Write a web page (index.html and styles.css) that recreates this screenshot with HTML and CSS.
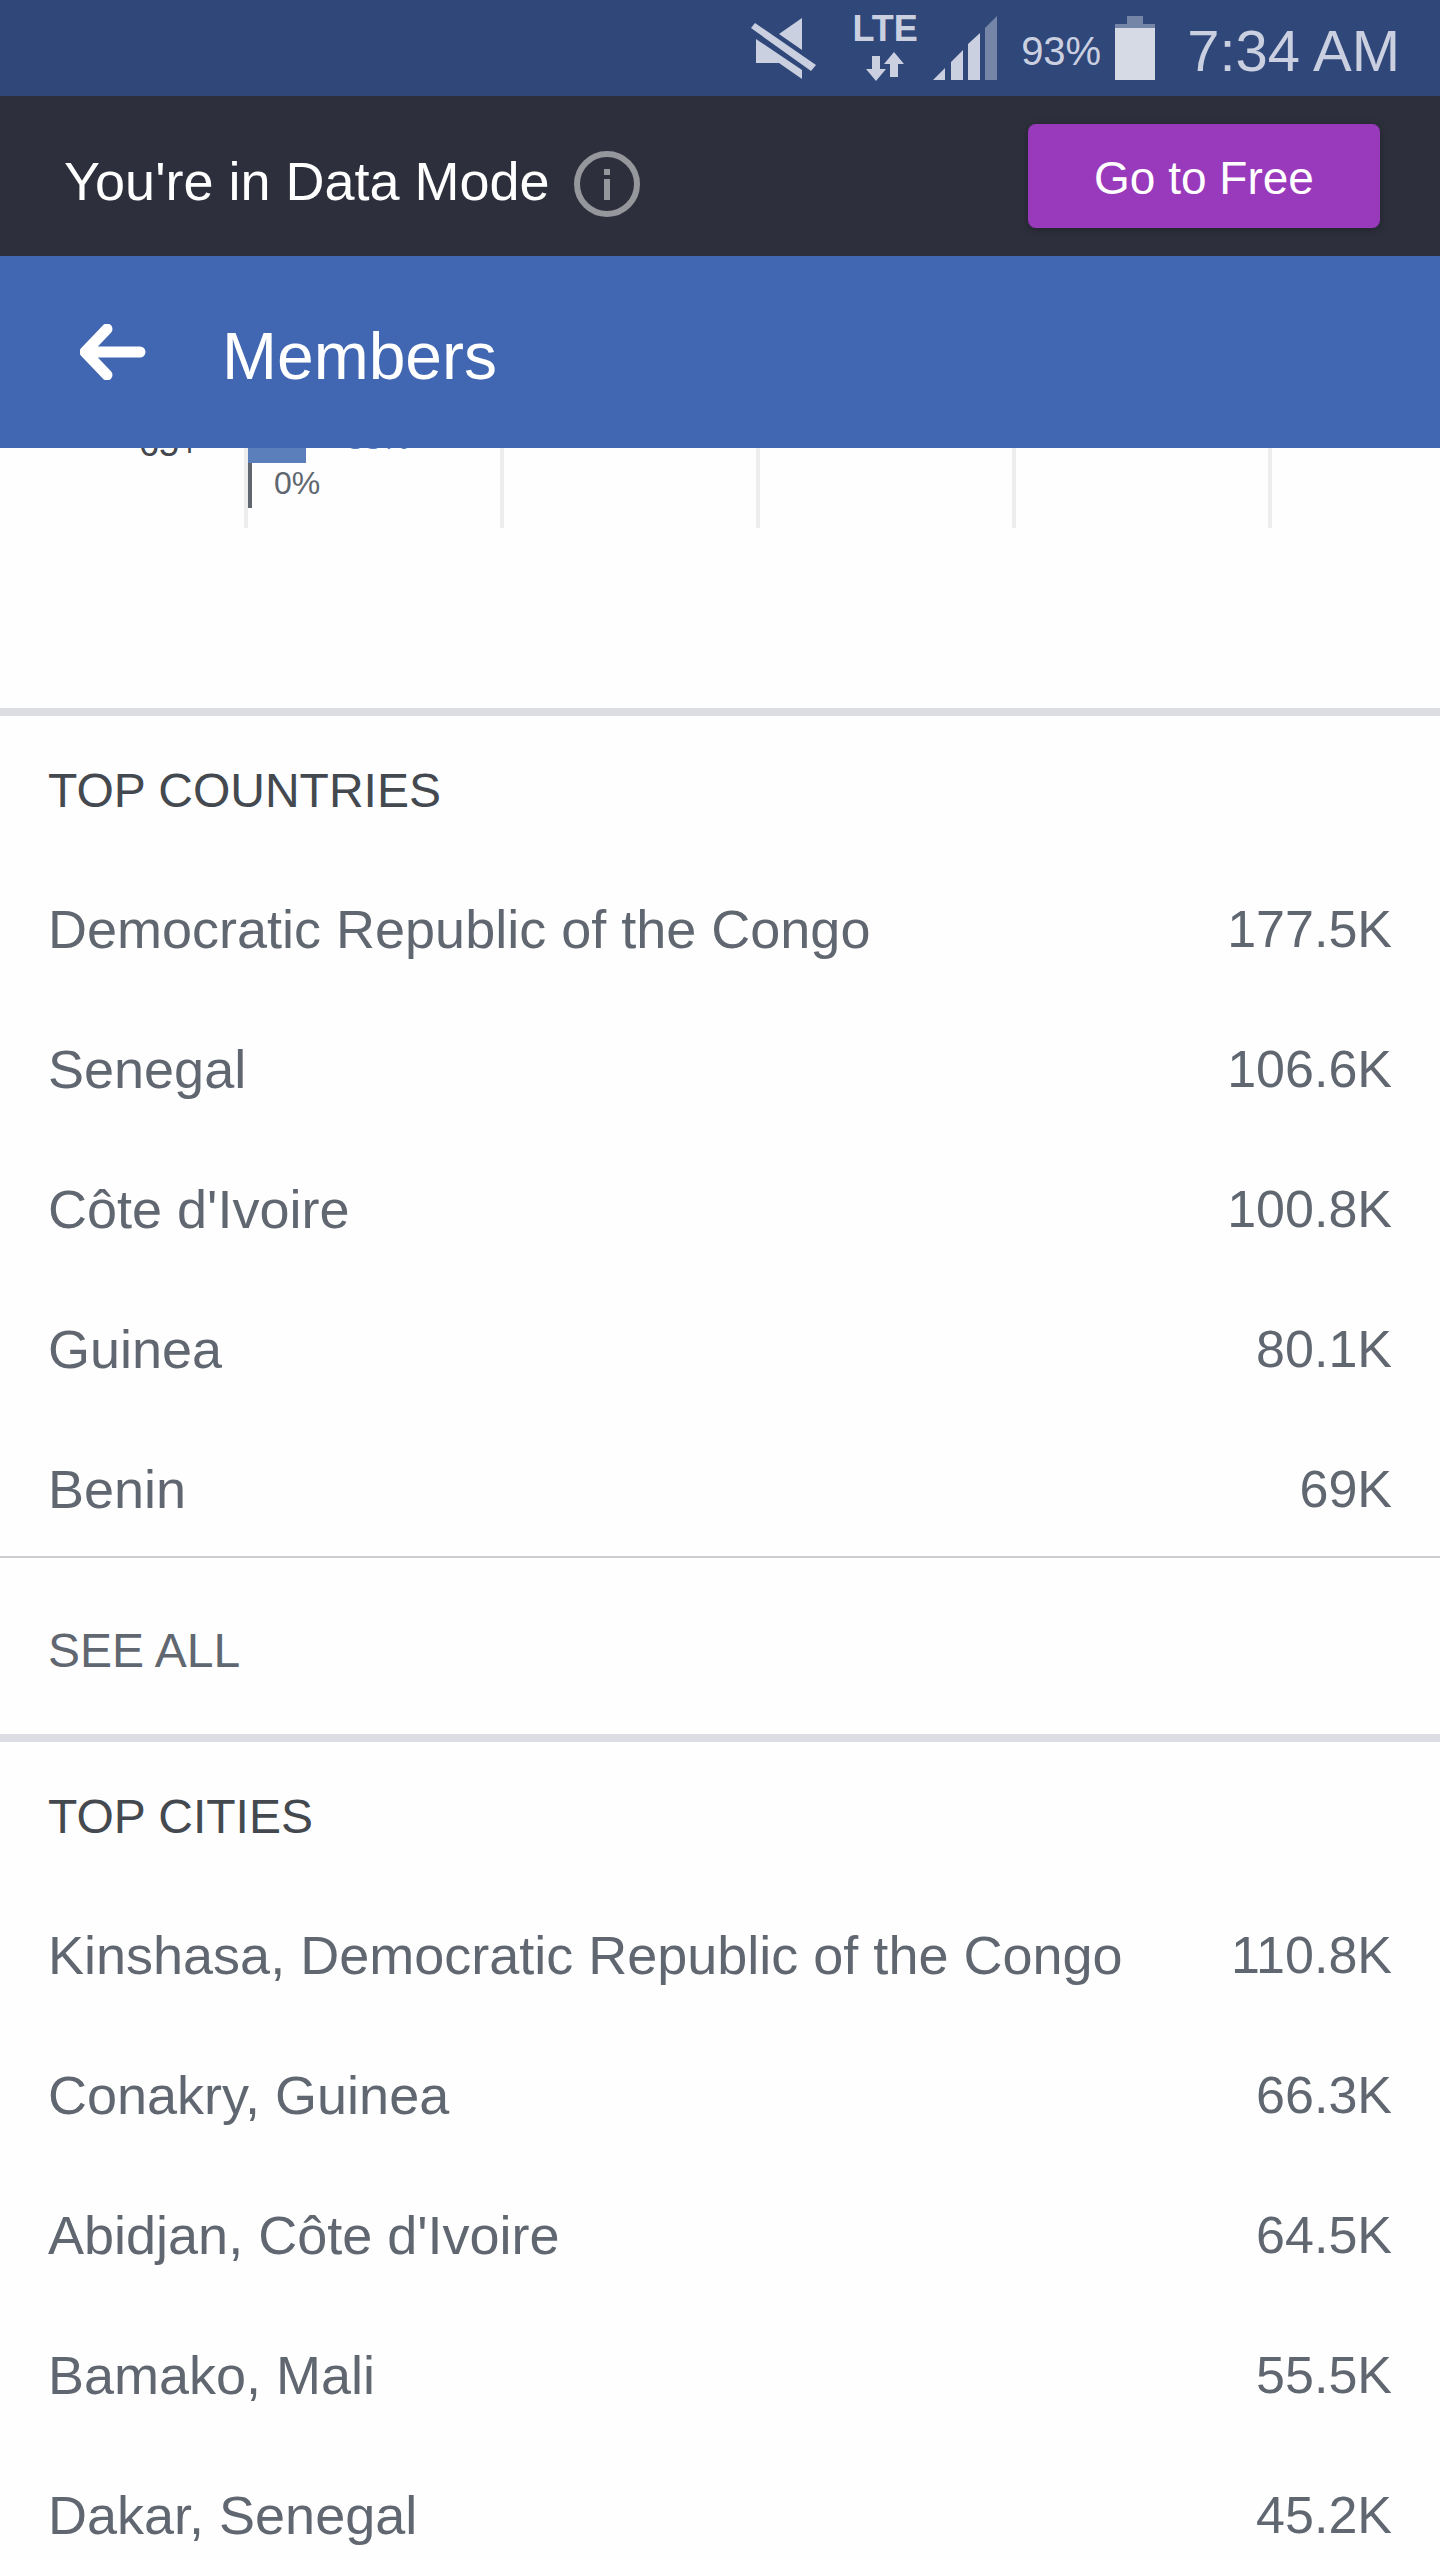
FILE: index.html
```html
<!DOCTYPE html>
<html lang="en">
<head>
<meta charset="utf-8">
<meta name="viewport" content="width=device-width, initial-scale=1">
<title>Members</title>
<link rel="stylesheet" href="styles.css">
</head>
<body>
<div class="status-bar">
  <svg class="icon-mute" viewBox="0 0 66 64" aria-label="Muted"><path d="M51 2v32L28 18zM5 23l46 31v9L28 47H5z"/><path d="M4 7l-4 5 60 43 5-6z"/></svg>
  <div class="network">
    <span class="network-type">LTE</span>
    <svg class="icon-transfer" viewBox="0 0 38 30" aria-hidden="true"><path d="M6 4h8v13h6L10 29 0 17h6zM28 0l10 12h-6v13h-8V12h-6z"/></svg>
  </div>
  <svg class="icon-signal" viewBox="0 0 64 64" aria-label="Signal"><path d="M0 64l12-12v12zM18 64V46l12-12v30zM35 64V28l12-11v47z"/><path class="dim" d="M52 64V12L64 0v64z"/></svg>
  <span class="battery-level">93%</span>
  <svg class="icon-battery" viewBox="0 0 40 64" aria-label="Battery"><path class="dim" d="M12 0h16v8h12v4H0V8h12z"/><path class="charge" d="M0 12h40v52H0z"/></svg>
  <span class="clock">7:34 AM</span>
</div>

<div class="mode-bar">
  <span class="mode-text">You're in Data Mode</span>
  <button class="info" type="button" aria-label="About Data Mode">
    <svg viewBox="0 0 66 66"><circle cx="33" cy="33" r="30"/><path d="M33 18v6M33 28v21"/></svg>
  </button>
  <button class="mode-switch" type="button">Go to Free</button>
</div>

<header class="title-bar">
  <button class="back" type="button" aria-label="Back">
    <svg viewBox="0 0 66 56"><path d="M27 5L5 28l22 23M7 28h53"/></svg>
  </button>
  <h1>Members</h1>
</header>

<main>
  <section class="chart" aria-label="Members by age">
    <div class="plot">
      <span class="age">65+</span>
      <div class="grid-lines"><i></i><i></i><i></i><i></i><i></i></div>
      <div class="bars">
        <div class="bar-row men"><span class="bar" style="width: 58px"></span><span>33%</span></div>
        <div class="bar-row women"><span class="bar" style="width: 4px"></span><span>0%</span></div>
      </div>
    </div>
  </section>

  <section class="list">
    <h2>TOP COUNTRIES</h2>
    <table>
      <tr><th scope="row">Democratic Republic of the Congo</th><td>177.5K</td></tr>
      <tr><th scope="row">Senegal</th><td>106.6K</td></tr>
      <tr><th scope="row">Côte d'Ivoire</th><td>100.8K</td></tr>
      <tr><th scope="row">Guinea</th><td>80.1K</td></tr>
      <tr><th scope="row">Benin</th><td>69K</td></tr>
    </table>
    <a class="see-all" href="#">SEE ALL</a>
  </section>

  <section class="list">
    <h2>TOP CITIES</h2>
    <table>
      <tr><th scope="row">Kinshasa, Democratic Republic of the Congo</th><td>110.8K</td></tr>
      <tr><th scope="row">Conakry, Guinea</th><td>66.3K</td></tr>
      <tr><th scope="row">Abidjan, Côte d'Ivoire</th><td>64.5K</td></tr>
      <tr><th scope="row">Bamako, Mali</th><td>55.5K</td></tr>
      <tr><th scope="row">Dakar, Senegal</th><td>45.2K</td></tr>
    </table>
  </section>
</main>
</body>
</html>
```
FILE: styles.css
```css
* { box-sizing: border-box; }

body {
  margin: 0;
  height: 100vh;
  display: flex;
  flex-direction: column;
  overflow: hidden;
  background: #fefefe;
  color: #606770;
  font-family: "Liberation Sans", Arial, sans-serif;
}

button {
  border: 0;
  padding: 0;
  background: none;
  color: inherit;
  font-family: inherit;
  cursor: pointer;
}

svg { display: block; flex: none; }

/* Status bar */
.status-bar {
  flex: none;
  display: flex;
  align-items: center;
  justify-content: flex-end;
  height: 96px;
  padding-right: 40px;
  background: #30477a;
  color: #cad0e0;
  fill: #cad0e0;
}
.icon-mute { width: 66px; height: 64px; margin-right: 34px; }
.network {
  display: flex;
  flex-direction: column;
  align-items: center;
  gap: 8px;
  width: 68px;
  margin-right: 14px;
}
.network-type { font-size: 36px; font-weight: 700; line-height: 30px; }
.icon-transfer { width: 38px; height: 30px; }
.icon-signal { width: 64px; height: 64px; margin-right: 24px; }
.dim { opacity: 0.45; }
.battery-level { padding-top: 6px; font-size: 40px; margin-right: 14px; }
.icon-battery { width: 40px; height: 64px; margin-right: 32px; }
.charge { fill: #d6dae5; }
.clock { font-size: 58px; padding-top: 4px; }

/* Data mode banner */
.mode-bar {
  flex: none;
  display: flex;
  align-items: center;
  height: 160px;
  padding: 0 60px 0 64px;
  background: #2d303c;
  color: #fff;
}
.mode-text { font-size: 54px; padding-top: 10px; }
.info { margin-left: 24px; padding-top: 16px; }
.info svg {
  width: 66px;
  height: 66px;
  fill: none;
  stroke: #96979c;
  stroke-width: 6;
}
.mode-switch {
  width: 352px;
  height: 104px;
  margin-left: auto;
  padding-top: 4px;
  border-radius: 8px;
  background: #9939bb;
  box-shadow: 0 2px 8px rgba(0, 0, 0, 0.3);
  font-size: 46px;
}

/* Title bar */
.title-bar {
  flex: none;
  display: flex;
  align-items: center;
  gap: 76px;
  height: 192px;
  padding: 0 80px;
  background: #4267b2;
  color: #fff;
}
.back svg {
  width: 66px;
  height: 56px;
  fill: none;
  stroke: #fff;
  stroke-width: 11;
  stroke-linecap: round;
  stroke-linejoin: round;
}
h1 { margin: 0; padding-top: 8px; font-size: 66px; font-weight: 400; }

main {
  flex: 1;
  min-height: 0;
  overflow-y: auto;
  scrollbar-width: none;
}

/* Age chart, scrolled to its last row */
.chart { padding-bottom: 180px; }
.plot {
  display: grid;
  grid-template-columns: 244px 1fr;
  align-items: end;
  align-content: end;
  height: 80px;
  overflow: hidden;
}
.age {
  grid-area: 1 / 1;
  padding: 0 44px 64px 0;
  color: #44484e;
  font-size: 36px;
  line-height: 40px;
  text-align: right;
}
.grid-lines {
  grid-area: 1 / 2;
  display: grid;
  grid-template-columns: repeat(4, 1fr) 172px;
  align-self: stretch;
}
.grid-lines i { border-left: 4px solid #ededed; }
.bars { grid-area: 1 / 2; padding: 0 0 20px 4px; }
.bar-row {
  display: flex;
  align-items: flex-start;
  height: 45px;
  font-size: 32px;
  line-height: 40px;
}
.bar { height: 100%; background: currentColor; }
.men { gap: 40px; color: #5a7fbb; }
.women { gap: 22px; }

/* Ranked lists */
.list { border-top: 8px solid #dcdde3; }
h2 {
  display: flex;
  align-items: center;
  height: 140px;
  margin: 0;
  padding: 8px 48px 0;
  color: #444950;
  font-size: 48px;
  font-weight: 400;
}
table { width: 100%; border-collapse: collapse; }
tr { height: 140px; }
th, td { padding: 6px 48px 0; font-weight: 400; white-space: nowrap; }
th { padding-right: 0; font-size: 54px; text-align: left; }
td { padding-left: 0; font-size: 52px; text-align: right; }
.see-all {
  display: flex;
  align-items: center;
  height: 178px;
  padding: 8px 48px 0;
  border-top: 2px solid #ccccd1;
  color: inherit;
  font-size: 48px;
  text-decoration: none;
}
```
